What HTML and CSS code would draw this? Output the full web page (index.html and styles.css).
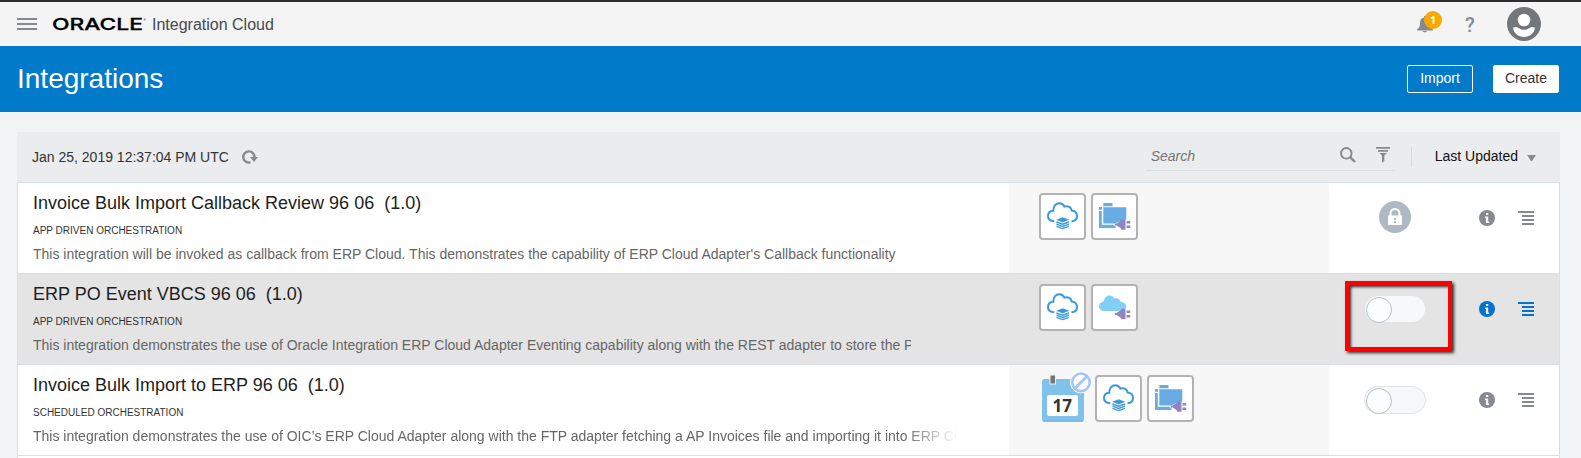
FILE: index.html
```html
<!DOCTYPE html>
<html lang="en">
<head>
<meta charset="utf-8">
<title>Integrations</title>
<link rel="stylesheet" href="styles.css">
</head>
<body>
<svg class="defs" width="0" height="0">
  <defs>
    <symbol id="cloud-stack" viewBox="0 0 32 28">
      <path d="M7.300 19.300C3.200 19 1 16.600 1 13.900c0-3 2.300-5 5.300-5.200C6 4.400 8.700 1.300 12.200 1.300c2.500 0 4.300 1.300 5.200 3.300 3.600-1.400 7.100.8 7.300 4 3.300.4 5.300 2.500 5.300 5.400 0 2.900-2.200 5-5.500 5.300" fill="none" stroke="#3b9ad9" stroke-width="2"/>
      <path d="M15.700 15.200l6.500 2.600-6.500 2.600-6.500-2.600z" fill="#3b9ad9"/>
      <path d="M9.400 20l6.300 2.200L22 20M9.400 22.200l6.300 2.200 6.300-2.200M9.400 24.400l6.300 2.200 6.300-2.200" fill="none" stroke="#3b9ad9" stroke-width="1.400"/>
    </symbol>
    <symbol id="plug" viewBox="0 0 16 11">
      <path d="M0 4.500h2.200L6.500 1.500V.3H11v10.400H6.500V9.500L2.200 6.500H0zM12 2h4v2.500h-4zM12 6.500h4V9h-4z" fill="#9184c2"/>
    </symbol>
    <symbol id="file-plug" viewBox="0 0 32 28">
      <path d="M4.300 1h9.200v3.200H4.300zM0 5h3v2.700H0zM4.300 5.300H27.300V17.500l-3 .3L16 21.500H4.300zM0 9h2.800v13.800H14l2.500 1.500V26H0z" fill="#69abe3"/>
      <use href="#plug" x="15.500" y="17" width="16" height="11"/>
    </symbol>
    <symbol id="cloud-plug" viewBox="0 0 32 28">
      <path d="M5 18C2 18 0 15.800 0 13.200c0-2.400 2-4.400 4.700-4.600C5.300 5 7.500 2.500 10.500 2.500c2.200 0 4 1.100 4.800 2.900 3.100-.9 6 .8 6.500 3.500 3 .1 5.400 1.800 5.400 4.600 0 1-.2 1.700-.6 2.500L20 18z" fill="#82cff6"/>
      <use href="#plug" x="15.500" y="15.500" width="16" height="11"/>
    </symbol>
    <symbol id="info" viewBox="0 0 16 16">
      <circle cx="8" cy="8" r="8" fill="currentColor"/>
      <path d="M7 3h2.300v2.100H7zM6 6.500h3.200V11.500h1V13H6.900V8H6z" fill="#fff" opacity=".9"/>
    </symbol>
    <symbol id="menu-lines" viewBox="0 0 16 14">
      <path d="M0 0h16v2H0zM4 4h12v2H4zM4 8h12v2H4zM4 12h12v2H4z" fill="currentColor"/>
    </symbol>
  </defs>
</svg>

<header class="topbar">
  <svg class="burger" width="20" height="12" viewBox="0 0 20 12"><path d="M0 0h20v2H0zM0 5h20v2H0zM0 10h20v2H0z" fill="#868a8e"/></svg>
  <svg class="logo" width="95" height="18" viewBox="0 0 95 18">
    <text class="logo-text" x="0" y="15" textLength="91" lengthAdjust="spacingAndGlyphs">ORACLE</text>
    <circle cx="92.600" cy="4.500" r="1" fill="#888"/>
  </svg>
  <span class="product">Integration Cloud</span>
  <div class="bell">
    <svg width="16" height="17" viewBox="0 0 16 17"><path d="M7 0h2v1.500c3 .6 4 2.800 4 5.500 0 3.500.6 5 3 6.500v1H0v-1C2.400 12 3 10.500 3 7c0-2.700 1-4.900 4-5.500zM5.500 15h4.500c-.5 1.800-4 1.800-4.500 0z" fill="#868a8e"/></svg>
    <span class="badge">1</span>
  </div>
  <span class="help">?</span>
  <svg class="avatar" width="34" height="34" viewBox="0 0 34 34">
    <circle cx="17" cy="17" r="17" fill="#73777a"/>
    <circle cx="17" cy="13" r="6.300" fill="#fff"/>
    <path d="M6.200 20.500c2-1 4-.6 5.800.7 3 2 7 2 10 0 1.800-1.300 3.800-1.700 5.800-.7C28 26 22.500 30 17 30S6 26 6.200 20.500z" fill="#fff"/>
  </svg>
</header>

<div class="titlebar">
  <h1 class="page-title">Integrations</h1>
  <button class="btn btn-outline">Import</button>
  <button class="btn btn-solid">Create</button>
</div>

<main class="panel">
  <div class="toolbar">
    <span class="stamp">Jan 25, 2019 12:37:04 PM UTC</span>
    <svg class="refresh" width="16" height="14" viewBox="0 0 16 14"><path d="M8.500 12.300A5.600 5.600 0 1 1 12.400 7.500" fill="none" stroke="#868a8e" stroke-width="2.400"/><path d="M8 7h8l-4 5z" fill="#868a8e"/></svg>
    <div class="search">
      <span class="placeholder">Search</span>
      <svg class="lens" width="16" height="16" viewBox="0 0 16 16"><circle cx="6.300" cy="6.300" r="5.300" fill="none" stroke="#868a8e" stroke-width="1.900"/><path d="M10 10l5 5" stroke="#868a8e" stroke-width="2.400"/></svg>
      <svg class="filter" width="14" height="16" viewBox="0 0 14 16"><path d="M0 0h14v1.700H0zM2 3h10v1.700H2zM3.500 6h7.500L8.300 8.500V14L6 15.700V8.500z" fill="#868a8e"/></svg>
    </div>
    <span class="divider"></span>
    <span class="sort">Last Updated</span>
    <svg class="caret" width="9" height="6" viewBox="0 0 9 6"><path d="M0 0h9L5 6H4z" fill="#868a8e"/></svg>
  </div>

  <div class="row">
    <div class="info">
      <div class="name">Invoice Bulk Import Callback Review 96 06&nbsp; (1.0)</div>
      <div class="kind">APP DRIVEN ORCHESTRATION</div>
      <div class="desc">This integration will be invoked as callback from ERP Cloud. This demonstrates the capability of ERP Cloud Adapter's Callback functionality</div>
    </div>
    <div class="apps">
      <div class="app"><svg width="32" height="28"><use href="#cloud-stack"/></svg></div>
      <div class="app"><svg width="32" height="28"><use href="#file-plug"/></svg></div>
    </div>
    <div class="actions">
      <div class="state">
        <svg class="lock" width="32" height="32" viewBox="0 0 32 32"><circle cx="16" cy="16" r="16" fill="#aeb9c4"/><path d="M11.500 15v-2.500a4.500 4.500 0 0 1 9 0V15" fill="none" stroke="#fff" stroke-width="2"/><path d="M9 14.500h14V24H9z" fill="#fff"/><path d="M15 17h2v2h-2zM15 20h2v2h-2z" fill="#aeb9c4"/></svg>
      </div>
      <svg class="act-info" width="16" height="16"><use href="#info"/></svg>
      <svg class="act-menu" width="16" height="14"><use href="#menu-lines"/></svg>
    </div>
  </div>

  <div class="row row-hover">
    <div class="info">
      <div class="name">ERP PO Event VBCS 96 06&nbsp; (1.0)</div>
      <div class="kind">APP DRIVEN ORCHESTRATION</div>
      <div class="desc desc-cut">This integration demonstrates the use of Oracle Integration ERP Cloud Adapter Eventing capability along with the REST adapter to store the PO</div>
    </div>
    <div class="apps">
      <div class="app"><svg width="32" height="28"><use href="#cloud-stack"/></svg></div>
      <div class="app"><svg width="32" height="28"><use href="#cloud-plug"/></svg></div>
    </div>
    <div class="actions">
      <div class="state"><span class="toggle toggle-plain"></span><span class="callout"></span></div>
      <svg class="act-info" width="16" height="16"><use href="#info"/></svg>
      <svg class="act-menu" width="16" height="14"><use href="#menu-lines"/></svg>
    </div>
  </div>

  <div class="row">
    <div class="info">
      <div class="name">Invoice Bulk Import to ERP 96 06&nbsp; (1.0)</div>
      <div class="kind">SCHEDULED ORCHESTRATION</div>
      <div class="desc desc-fade">This integration demonstrates the use of OIC’s ERP Cloud Adapter along with the FTP adapter fetching a AP Invoices file and importing it into ERP Cloud</div>
    </div>
    <div class="apps apps-sched">
      <svg class="calendar" width="51" height="52" viewBox="0 0 51 52">
        <rect x="1" y="9" width="42" height="42.500" rx="2.500" fill="#7fc3ec"/>
        <path d="M1.500 50.500h41l-1 1.200h-39z" fill="#6fb4de"/>
        <rect x="6" y="25" width="31" height="21" rx="2" fill="#fff"/>
        <text class="day" x="11.500" y="42" textLength="19.500" lengthAdjust="spacingAndGlyphs">17</text>
        <rect x="9" y="5" width="5.500" height="9" fill="#777" stroke="#eee" stroke-width="1"/>
        <circle cx="40" cy="12.300" r="11" fill="#fff"/>
        <circle cx="40" cy="12.300" r="8.800" fill="none" stroke="#a4c5f8" stroke-width="2.600"/>
        <path d="M34 18.300L46 6.300" stroke="#a4c5f8" stroke-width="2.800"/>
      </svg>
      <div class="app"><svg width="32" height="28"><use href="#cloud-stack"/></svg></div>
      <div class="app"><svg width="32" height="28"><use href="#file-plug"/></svg></div>
    </div>
    <div class="actions">
      <div class="state"><span class="toggle"></span></div>
      <svg class="act-info" width="16" height="16"><use href="#info"/></svg>
      <svg class="act-menu" width="16" height="14"><use href="#menu-lines"/></svg>
    </div>
  </div>
  <div class="row row-last"></div>
</main>
</body>
</html>
```

FILE: styles.css
```css
* { box-sizing: border-box; }
body {
  margin: 0;
  height: 458px;
  overflow: hidden;
  background: #f2f3f5;
  font-family: "Liberation Sans", Arial, sans-serif;
  font-size: 14px;
}
svg { display: block; flex: none; }
.defs { position: absolute; }

.topbar {
  height: 46px;
  border-top: 2px solid #2d2c31;
  background: #f4f4f4;
  display: flex;
  align-items: center;
  padding: 0 40px 0 17px;
}
.logo { margin-left: 15px; }
.logo-text { font: 500 16.500px Inter, "Liberation Sans", sans-serif; stroke: #000; stroke-width: .3px; }
.product { margin-left: 5px; padding-top: 2px; font-size: 16px; color: #454a4f; flex: 1; }
.bell { position: relative; width: 27px; height: 22px; padding-top: 3px; }
.badge {
  position: absolute;
  left: 7px;
  top: -2px;
  width: 18px;
  height: 18px;
  border-radius: 50%;
  background: #f8a900;
  color: #fff;
  font: bold 10px/18px "Open Sans", sans-serif;
  text-align: center;
}
.help { margin-left: 21px; width: 14px; padding-top: 1px; font: 500 20px/22px Roboto, sans-serif; color: #868a8e; }
.avatar { margin-left: 28px; }

.titlebar {
  height: 66px;
  background: #007ac9;
  display: flex;
  align-items: center;
  padding: 0 22px 0 17px;
}
.page-title { flex: 1; margin: 0; font-size: 28px; font-weight: 400; color: #fff; }
.btn {
  width: 66px;
  height: 28px;
  padding: 0 0 2px;
  border: 1px solid #fff;
  border-radius: 2px;
  font: 14px "Liberation Sans", Arial, sans-serif;
}
.btn-outline { background: transparent; color: #fff; }
.btn-solid { margin-left: 20px; background: #fff; color: #333; }

.panel { margin: 20px 21px 0 17px; }
.toolbar {
  height: 50px;
  background: #ebecee;
  display: flex;
  align-items: center;
  padding: 0 24px 0 15px;
}
.stamp { color: #333; }
.refresh { margin-left: 13px; }
.search {
  margin-left: auto;
  width: 249px;
  height: 31px;
  margin-top: -4px;
  border-bottom: 1px solid #d9dfe3;
  display: flex;
  align-items: center;
  padding-left: 5px;
}
.placeholder { flex: 1; padding-top: 3px; font-style: italic; line-height: 20px; color: #757575; }
.filter { margin: 0 5px 0 20px; }
.divider { width: 1px; height: 20px; margin: 0 23px 0 16px; background: #d4dade; }
.sort { color: #111; padding-bottom: 2px; }
.caret { margin-left: 9px; margin-top: 2px; }

.row {
  height: 91px;
  border: 1px solid #d6dfe6;
  border-bottom: 0;
  background: #fff;
  display: flex;
}
.row-last { height: 3px; }
.row-hover { background: #e4e4e4; }
.info { width: 991px; padding: 9px 0 0 15px; overflow: hidden; }
.name { font-size: 18px; line-height: 22px; color: #1e1e1e; white-space: nowrap; }
.kind { margin-top: 11px; font-size: 10px; line-height: 12px; color: #333; }
.desc { margin-top: 8px; line-height: 18px; color: #666; white-space: nowrap; overflow: hidden; }
.desc-cut { width: 878px; }
.desc-fade { width: 925px; -webkit-mask-image: linear-gradient(to right, #000 870px, transparent 925px); mask-image: linear-gradient(to right, #000 870px, transparent 925px); }
.apps { width: 320px; padding: 10px 0 0 30px; background: #f7f7f7; display: flex; gap: 5px; }
.row-hover .apps { background: none; }
.app {
  width: 47px;
  height: 47px;
  padding: 7px 0 0 6px;
  border: 2px solid #b3b3b3;
  border-radius: 4px;
  background: #fff;
}
.apps-sched { padding-left: 32px; }
.calendar { margin: -5px -2px 0 0; }
.day { font: bold 18.500px "Open Sans", sans-serif; fill: #333; }

.actions { flex: 1; display: flex; align-items: flex-start; color: #868a8e; }
.row-hover .actions { color: #0572ce; }
.state { position: relative; width: 132px; height: 70px; display: flex; justify-content: center; padding-top: 18px; }
.toggle {
  width: 62px;
  height: 28px;
  margin-top: 3px;
  border: 1px solid #dfe4e7;
  border-radius: 14px;
  background: #f7f8f9;
  padding: 1px;
}
.toggle::before {
  content: "";
  display: block;
  width: 24px;
  height: 24px;
  border: 1px solid #b6c1ca;
  border-radius: 50%;
  background: #fcfdfe;
}
.toggle-plain { border-color: transparent; background-clip: padding-box; }
.callout {
  position: absolute;
  left: 16px;
  top: 7px;
  width: 107px;
  height: 70px;
  border: 4px solid #f00;
  box-shadow: 2px 2px 3px rgba(0, 0, 0, .8), inset 2px 2px 3px rgba(0, 0, 0, .8);
}
.act-info { margin: 27px 0 0 18px; }
.act-menu { margin: 28px 0 0 23px; }
```
